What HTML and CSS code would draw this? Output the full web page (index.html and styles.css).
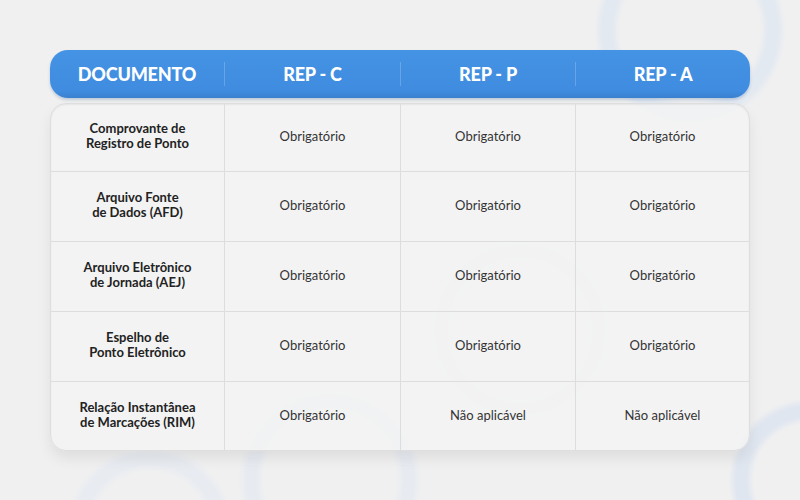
FILE: index.html
```html
<!DOCTYPE html>
<html lang="pt-BR">
<head>
<meta charset="utf-8">
<title>Documentos REP</title>
<link rel="stylesheet" href="styles.css">
</head>
<body>
<main class="page">
  <div class="table">
    <div class="head">
      <div class="hcell">DOCUMENTO</div>
      <div class="hcell">REP - C</div>
      <div class="hcell">REP - P</div>
      <div class="hcell">REP - A</div>
    </div>
    <div class="card">
      <div class="row">
        <div class="cell label">Comprovante de<br>Registro de Ponto</div>
        <div class="cell">Obrigatório</div>
        <div class="cell">Obrigatório</div>
        <div class="cell">Obrigatório</div>
      </div>
      <div class="row">
        <div class="cell label">Arquivo Fonte<br>de Dados (AFD)</div>
        <div class="cell">Obrigatório</div>
        <div class="cell">Obrigatório</div>
        <div class="cell">Obrigatório</div>
      </div>
      <div class="row">
        <div class="cell label">Arquivo Eletrônico<br>de Jornada (AEJ)</div>
        <div class="cell">Obrigatório</div>
        <div class="cell">Obrigatório</div>
        <div class="cell">Obrigatório</div>
      </div>
      <div class="row">
        <div class="cell label">Espelho de<br>Ponto Eletrônico</div>
        <div class="cell">Obrigatório</div>
        <div class="cell">Obrigatório</div>
        <div class="cell">Obrigatório</div>
      </div>
      <div class="row last">
        <div class="cell label">Relação Instantânea<br>de Marcações (RIM)</div>
        <div class="cell">Obrigatório</div>
        <div class="cell">Não aplicável</div>
        <div class="cell">Não aplicável</div>
      </div>
    </div>
  </div>
</main>
</body>
</html>
```
FILE: styles.css
```css
* { box-sizing: border-box; }
html, body { margin: 0; padding: 0; }
body {
  width: 800px;
  height: 500px;
  overflow: hidden;
  font-family: "Lato", "Liberation Sans", sans-serif;
  background-color: #f0f0f0;
  background-image:
    radial-gradient(circle at 690px 30px, transparent 70px, rgba(214,226,242,0.5) 78px, rgba(214,226,242,0.5) 88px, transparent 96px),
    radial-gradient(circle at 810px 480px, transparent 56px, rgba(210,222,240,0.55) 64px, rgba(210,222,240,0.55) 74px, transparent 82px),
    radial-gradient(circle at 520px 330px, transparent 66px, rgba(218,228,242,0.35) 74px, rgba(218,228,242,0.35) 84px, transparent 92px),
    radial-gradient(circle at 330px 480px, transparent 66px, rgba(218,228,242,0.4) 74px, rgba(218,228,242,0.4) 84px, transparent 92px),
    radial-gradient(circle at 150px 530px, transparent 58px, rgba(220,229,243,0.4) 66px, rgba(220,229,243,0.4) 76px, transparent 84px);
}
.page {
  padding: 50px 0 0 50px;
}
.table {
  width: 700px;
  display: flex;
  flex-direction: column;
  gap: 5px;
}
.head {
  height: 48px;
  border-radius: 18px;
  background: linear-gradient(180deg, #4593e4 0%, #3f8ce0 85%, #3a80cf 100%);
  box-shadow: 0 2px 3px rgba(40, 90, 150, 0.25);
  display: grid;
  grid-template-columns: 174px 176px 175px 175px;
  align-items: center;
}
.hcell {
  color: #fff;
  font-weight: 900;
  font-size: 18px;
  letter-spacing: -0.2px;
  text-align: center;
  line-height: 24px;
  border-left: 1px solid rgba(255,255,255,0.2);
}
.hcell:first-child { border-left: none; }
.card {
  height: 348px;
  border-radius: 16px;
  background: rgba(244, 244, 244, 0.8);
  border: 1px solid #dedede;
  box-shadow: 0 8px 14px rgba(0,0,0,0.07), inset 0 1px 2px rgba(0,0,0,0.06);
  display: grid;
  grid-template-rows: 68px 70px 70px 70px 68px;
  overflow: hidden;
}
.row {
  display: grid;
  grid-template-columns: 173px 176px 175px 174px;
  border-bottom: 1px solid #dddddd;
}
.row.last { border-bottom: none; }
.cell {
  display: flex;
  align-items: center;
  justify-content: center;
  text-align: center;
  font-size: 13px;
  color: #333;
  padding-bottom: 3px;
  border-left: 1px solid #dddddd;
}
.cell.label {
  border-left: none;
  font-weight: 700;
  font-size: 13px;
  line-height: 15px;
  color: #222;
}
```
